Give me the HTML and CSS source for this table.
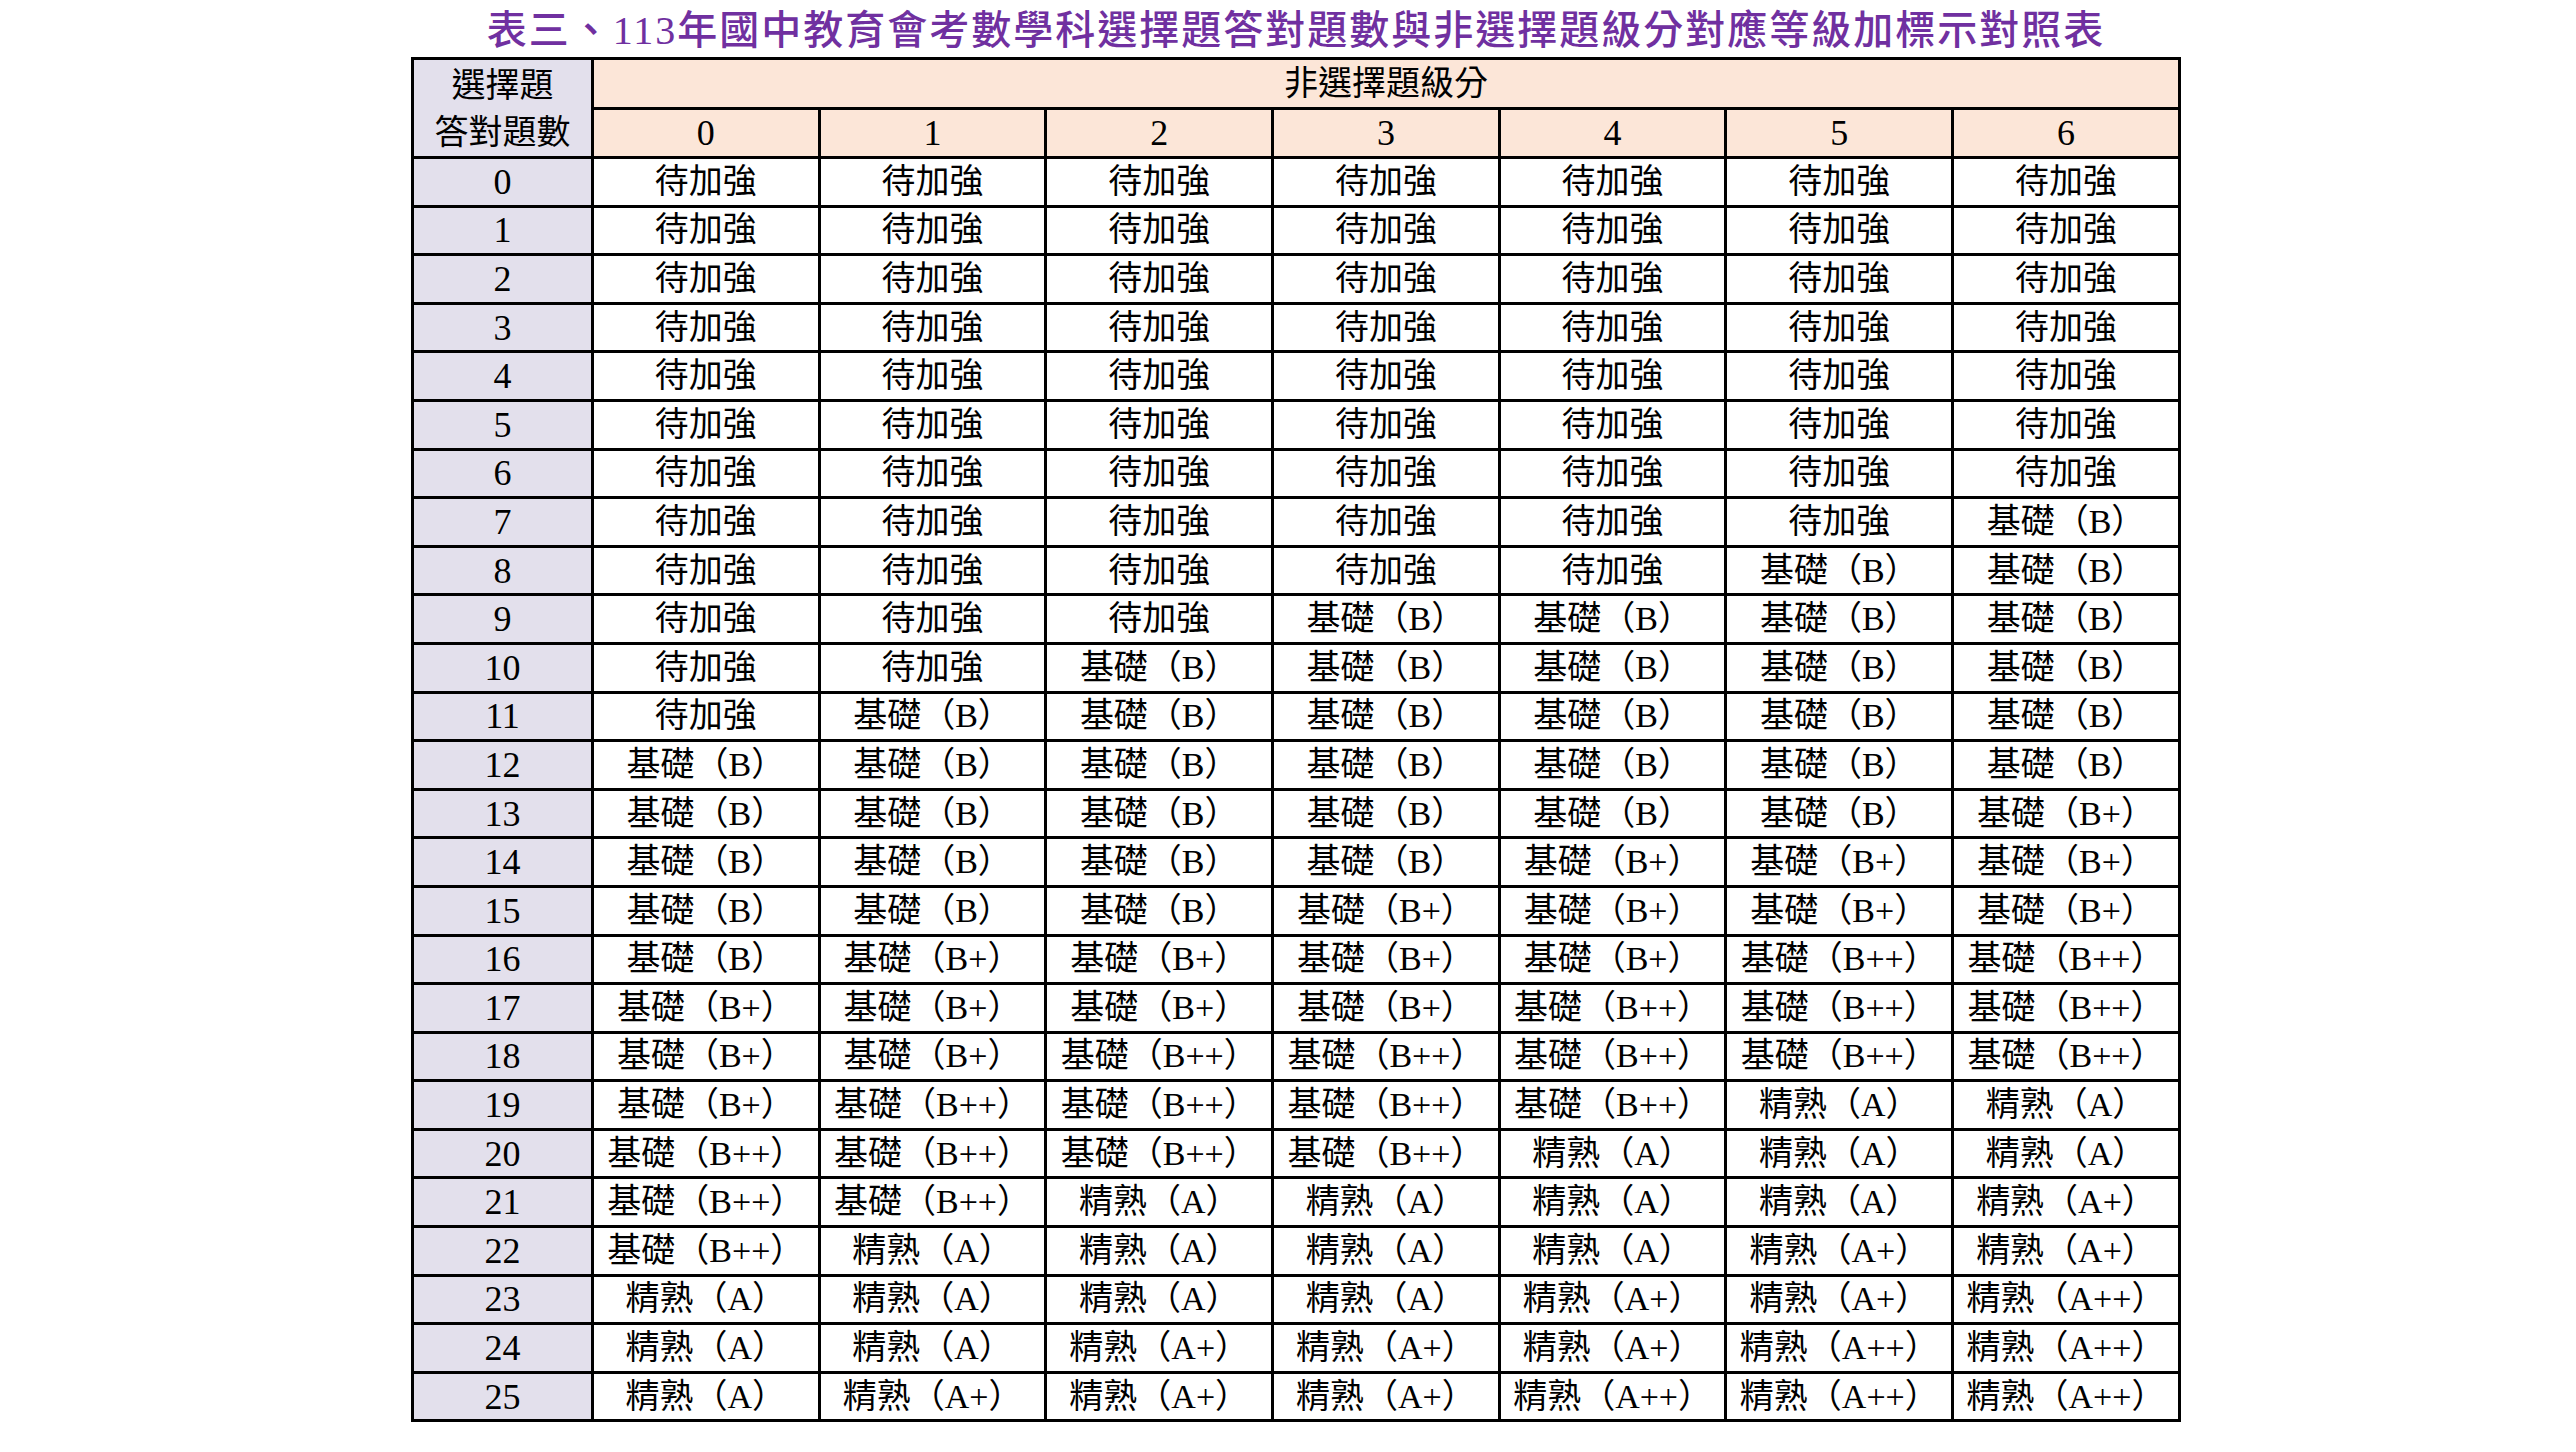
FILE: index.html
```html
<!DOCTYPE html>
<html lang="zh-Hant">
<head>
<meta charset="utf-8">
<title>表三、113年國中教育會考數學科選擇題答對題數與非選擇題級分對應等級加標示對照表</title>
<link rel="stylesheet" href="styles.css">
</head>
<body>
<div class="page">
  <h1 class="title">表三、113年國中教育會考數學科選擇題答對題數與非選擇題級分對應等級加標示對照表</h1>
  <table class="grid">
    <colgroup>
      <col class="c-first">
      <col class="c-data"><col class="c-data"><col class="c-data"><col class="c-data"><col class="c-data"><col class="c-data"><col class="c-data">
    </colgroup>
    <thead>
      <tr class="h1">
        <th class="corner" rowspan="2">選擇題<br>答對題數</th>
        <th class="top" colspan="7">非選擇題級分</th>
      </tr>
      <tr class="h2">
        <th class="top num">0</th><th class="top num">1</th><th class="top num">2</th><th class="top num">3</th><th class="top num">4</th><th class="top num">5</th><th class="top num">6</th>
      </tr>
    </thead>
    <tbody>
      <tr><th>0</th><td>待加強</td><td>待加強</td><td>待加強</td><td>待加強</td><td>待加強</td><td>待加強</td><td>待加強</td></tr>
      <tr><th>1</th><td>待加強</td><td>待加強</td><td>待加強</td><td>待加強</td><td>待加強</td><td>待加強</td><td>待加強</td></tr>
      <tr><th>2</th><td>待加強</td><td>待加強</td><td>待加強</td><td>待加強</td><td>待加強</td><td>待加強</td><td>待加強</td></tr>
      <tr><th>3</th><td>待加強</td><td>待加強</td><td>待加強</td><td>待加強</td><td>待加強</td><td>待加強</td><td>待加強</td></tr>
      <tr><th>4</th><td>待加強</td><td>待加強</td><td>待加強</td><td>待加強</td><td>待加強</td><td>待加強</td><td>待加強</td></tr>
      <tr><th>5</th><td>待加強</td><td>待加強</td><td>待加強</td><td>待加強</td><td>待加強</td><td>待加強</td><td>待加強</td></tr>
      <tr><th>6</th><td>待加強</td><td>待加強</td><td>待加強</td><td>待加強</td><td>待加強</td><td>待加強</td><td>待加強</td></tr>
      <tr><th>7</th><td>待加強</td><td>待加強</td><td>待加強</td><td>待加強</td><td>待加強</td><td>待加強</td><td>基礎（B）</td></tr>
      <tr><th>8</th><td>待加強</td><td>待加強</td><td>待加強</td><td>待加強</td><td>待加強</td><td>基礎（B）</td><td>基礎（B）</td></tr>
      <tr><th>9</th><td>待加強</td><td>待加強</td><td>待加強</td><td>基礎（B）</td><td>基礎（B）</td><td>基礎（B）</td><td>基礎（B）</td></tr>
      <tr><th>10</th><td>待加強</td><td>待加強</td><td>基礎（B）</td><td>基礎（B）</td><td>基礎（B）</td><td>基礎（B）</td><td>基礎（B）</td></tr>
      <tr><th>11</th><td>待加強</td><td>基礎（B）</td><td>基礎（B）</td><td>基礎（B）</td><td>基礎（B）</td><td>基礎（B）</td><td>基礎（B）</td></tr>
      <tr><th>12</th><td>基礎（B）</td><td>基礎（B）</td><td>基礎（B）</td><td>基礎（B）</td><td>基礎（B）</td><td>基礎（B）</td><td>基礎（B）</td></tr>
      <tr><th>13</th><td>基礎（B）</td><td>基礎（B）</td><td>基礎（B）</td><td>基礎（B）</td><td>基礎（B）</td><td>基礎（B）</td><td>基礎（B+）</td></tr>
      <tr><th>14</th><td>基礎（B）</td><td>基礎（B）</td><td>基礎（B）</td><td>基礎（B）</td><td>基礎（B+）</td><td>基礎（B+）</td><td>基礎（B+）</td></tr>
      <tr><th>15</th><td>基礎（B）</td><td>基礎（B）</td><td>基礎（B）</td><td>基礎（B+）</td><td>基礎（B+）</td><td>基礎（B+）</td><td>基礎（B+）</td></tr>
      <tr><th>16</th><td>基礎（B）</td><td>基礎（B+）</td><td>基礎（B+）</td><td>基礎（B+）</td><td>基礎（B+）</td><td>基礎（B++）</td><td>基礎（B++）</td></tr>
      <tr><th>17</th><td>基礎（B+）</td><td>基礎（B+）</td><td>基礎（B+）</td><td>基礎（B+）</td><td>基礎（B++）</td><td>基礎（B++）</td><td>基礎（B++）</td></tr>
      <tr><th>18</th><td>基礎（B+）</td><td>基礎（B+）</td><td>基礎（B++）</td><td>基礎（B++）</td><td>基礎（B++）</td><td>基礎（B++）</td><td>基礎（B++）</td></tr>
      <tr><th>19</th><td>基礎（B+）</td><td>基礎（B++）</td><td>基礎（B++）</td><td>基礎（B++）</td><td>基礎（B++）</td><td>精熟（A）</td><td>精熟（A）</td></tr>
      <tr><th>20</th><td>基礎（B++）</td><td>基礎（B++）</td><td>基礎（B++）</td><td>基礎（B++）</td><td>精熟（A）</td><td>精熟（A）</td><td>精熟（A）</td></tr>
      <tr><th>21</th><td>基礎（B++）</td><td>基礎（B++）</td><td>精熟（A）</td><td>精熟（A）</td><td>精熟（A）</td><td>精熟（A）</td><td>精熟（A+）</td></tr>
      <tr><th>22</th><td>基礎（B++）</td><td>精熟（A）</td><td>精熟（A）</td><td>精熟（A）</td><td>精熟（A）</td><td>精熟（A+）</td><td>精熟（A+）</td></tr>
      <tr><th>23</th><td>精熟（A）</td><td>精熟（A）</td><td>精熟（A）</td><td>精熟（A）</td><td>精熟（A+）</td><td>精熟（A+）</td><td>精熟（A++）</td></tr>
      <tr><th>24</th><td>精熟（A）</td><td>精熟（A）</td><td>精熟（A+）</td><td>精熟（A+）</td><td>精熟（A+）</td><td>精熟（A++）</td><td>精熟（A++）</td></tr>
      <tr><th>25</th><td>精熟（A）</td><td>精熟（A+）</td><td>精熟（A+）</td><td>精熟（A+）</td><td>精熟（A++）</td><td>精熟（A++）</td><td>精熟（A++）</td></tr>
    </tbody>
  </table>
</div>
</body>
</html>
```

FILE: styles.css
```css
html, body {
  margin: 0;
  padding: 0;
  background: #ffffff;
}

.page {
  width: 1770px;
  margin-left: 411px;
}

.title {
  margin: 0;
  height: 57px;
  line-height: 62px;
  text-align: center;
  font-family: "Liberation Serif", "Noto Sans CJK TC", serif;
  font-size: 40px;
  font-weight: 500;
  letter-spacing: 2px;
  color: #7030a0;
  white-space: nowrap;
}

.grid {
  border-collapse: collapse;
  table-layout: fixed;
  width: 1767px;
  font-family: "Liberation Serif", "Noto Sans CJK TC", serif;
  font-size: 34px;
  color: #000;
}

.c-first {
  width: 180px;
}

.c-data {
  width: 226.7px;
}

.grid th,
.grid td {
  border: 3px solid #000;
  padding: 0;
  text-align: center;
  vertical-align: middle;
  font-weight: normal;
  line-height: 40px;
  white-space: nowrap;
}

.grid tbody th {
  background: #e3e0ec;
  font-size: 36px;
}

.grid tbody tr {
  height: 48.6px;
}

.h1 {
  height: 49px;
}

.h2 {
  height: 48px;
}

.grid .corner {
  background: #e3e0ec;
  line-height: 47px;
  padding-top: 2px;
}

.grid .top {
  background: #fce6d8;
}

.grid .num {
  font-size: 36px;
}

.grid td {
  background: #ffffff;
}
```
